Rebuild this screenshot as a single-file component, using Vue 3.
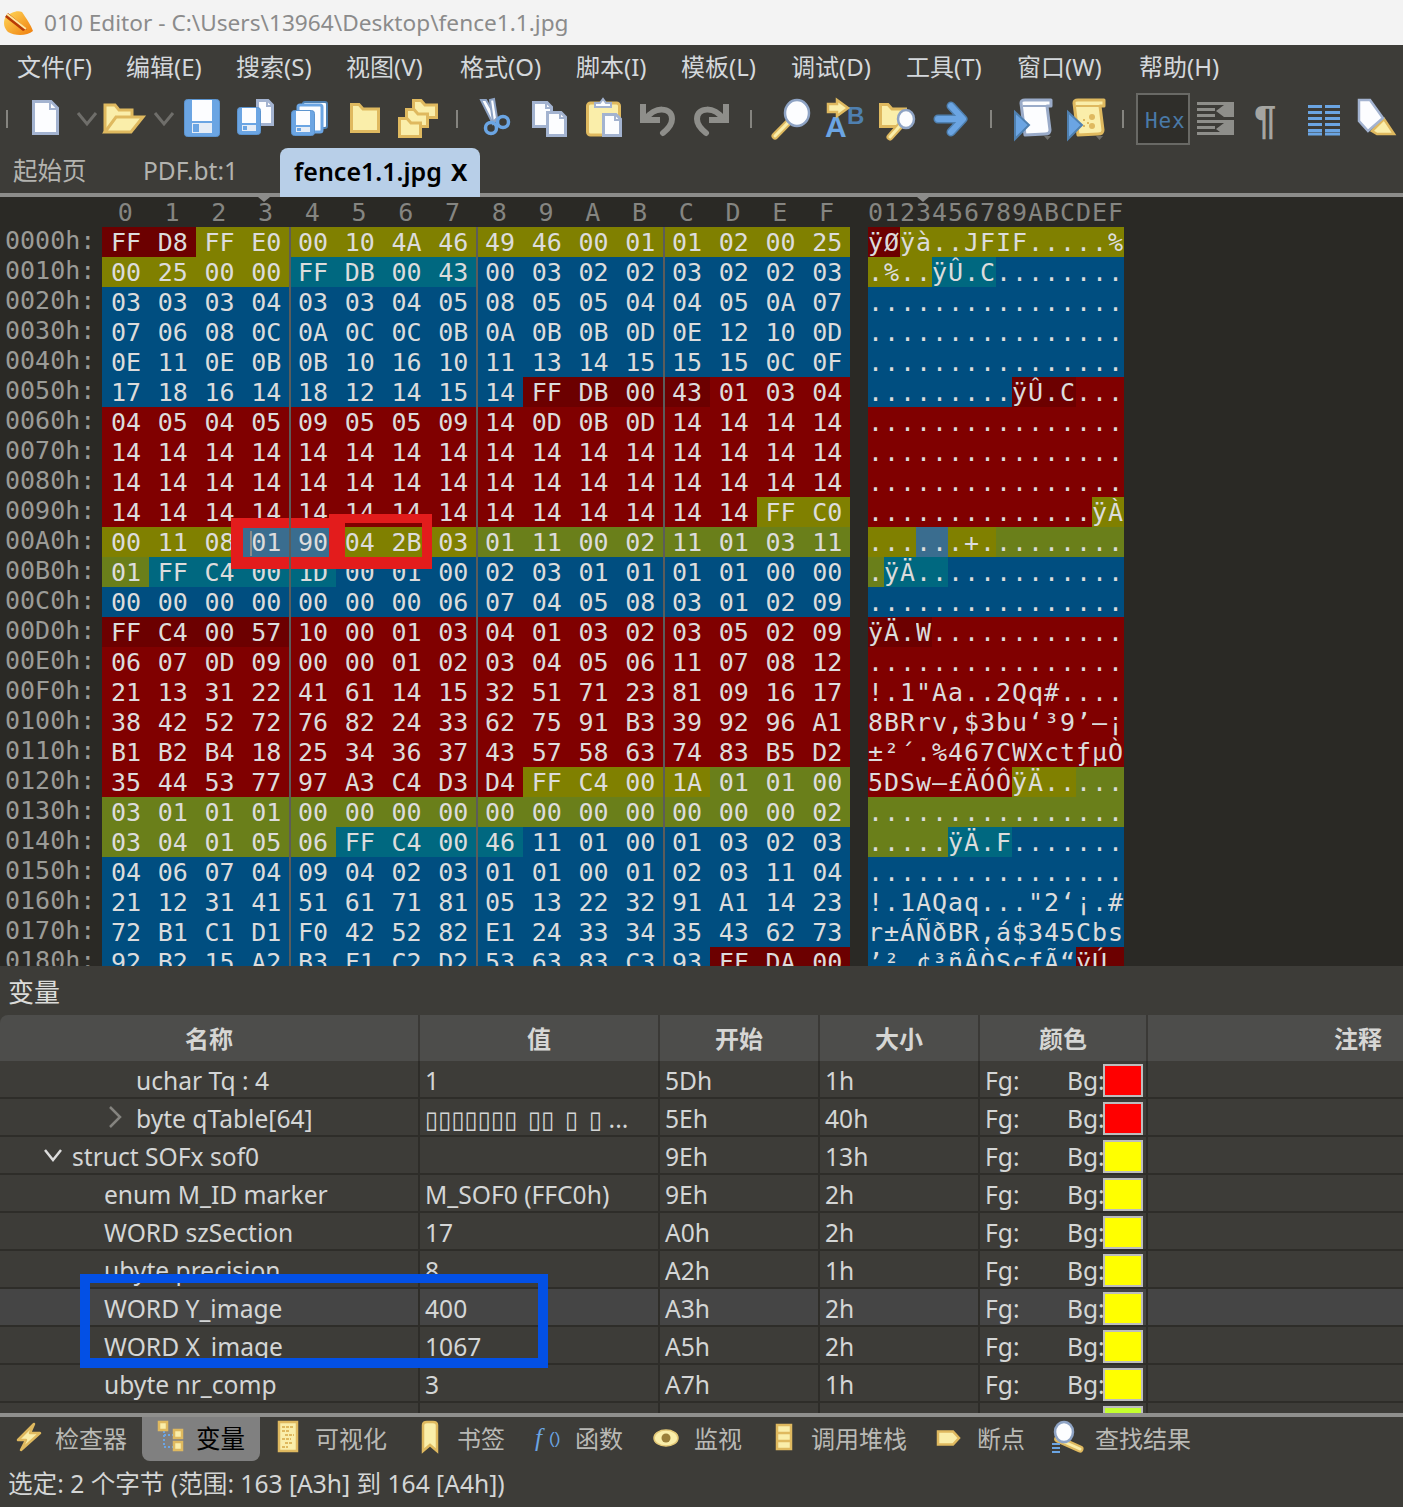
<script setup>
// hex dump, one string per 16 bytes
const dump = [
  'FF D8 FF E0 00 10 4A 46 49 46 00 01 01 02 00 25',
  '00 25 00 00 FF DB 00 43 00 03 02 02 03 02 02 03',
  '03 03 03 04 03 03 04 05 08 05 05 04 04 05 0A 07',
  '07 06 08 0C 0A 0C 0C 0B 0A 0B 0B 0D 0E 12 10 0D',
  '0E 11 0E 0B 0B 10 16 10 11 13 14 15 15 15 0C 0F',
  '17 18 16 14 18 12 14 15 14 FF DB 00 43 01 03 04',
  '04 05 04 05 09 05 05 09 14 0D 0B 0D 14 14 14 14',
  '14 14 14 14 14 14 14 14 14 14 14 14 14 14 14 14',
  '14 14 14 14 14 14 14 14 14 14 14 14 14 14 14 14',
  '14 14 14 14 14 14 14 14 14 14 14 14 14 14 FF C0',
  '00 11 08 01 90 04 2B 03 01 11 00 02 11 01 03 11',
  '01 FF C4 00 1D 00 01 00 02 03 01 01 01 01 00 00',
  '00 00 00 00 00 00 00 06 07 04 05 08 03 01 02 09',
  'FF C4 00 57 10 00 01 03 04 01 03 02 03 05 02 09',
  '06 07 0D 09 00 00 01 02 03 04 05 06 11 07 08 12',
  '21 13 31 22 41 61 14 15 32 51 71 23 81 09 16 17',
  '38 42 52 72 76 82 24 33 62 75 91 B3 39 92 96 A1',
  'B1 B2 B4 18 25 34 36 37 43 57 58 63 74 83 B5 D2',
  '35 44 53 77 97 A3 C4 D3 D4 FF C4 00 1A 01 01 00',
  '03 01 01 01 00 00 00 00 00 00 00 00 00 00 00 02',
  '03 04 01 05 06 FF C4 00 46 11 01 00 01 03 02 03',
  '04 06 07 04 09 04 02 03 01 01 00 01 02 03 11 04',
  '21 12 31 41 51 61 71 81 05 13 22 32 91 A1 14 23',
  '72 B1 C1 D1 F0 42 52 82 E1 24 33 34 35 43 62 73',
  '92 B2 15 A2 B3 F1 C2 D2 53 63 83 C3 93 FF DA 00'
]

// template colouring of the file, [first offset, last offset, class]
const ranges = [
  [0x00, 0x01, 'mk'], [0x02, 0x13, 'ol'], [0x14, 0x17, 'te'], [0x18, 0x58, 'bl'],
  [0x59, 0x5c, 'mk'], [0x5d, 0x9d, 're'], [0x9e, 0xa2, 'ol'], [0xa3, 0xa4, 'se'],
  [0xa5, 0xa7, 'ol'], [0xa8, 0xb0, 'gr'], [0xb1, 0xb4, 'te'], [0xb5, 0xcf, 'bl'],
  [0xd0, 0xd3, 'mk'], [0xd4, 0x128, 're'], [0x129, 0x12c, 'ol'], [0x12d, 0x144, 'gr'],
  [0x145, 0x148, 'te'], [0x149, 0x18c, 'bl'], [0x18d, 0x18f, 'mk']
]
const colourOf = (off) => ranges.find((r) => off >= r[0] && off <= r[1])[2]

const cp1252 = new TextDecoder('windows-1252')
const charOf = (b) => {
  if (b < 0x20 || b === 0x7f || b === 0x81 || b === 0x8d || b === 0x8f || b === 0x90 || b === 0x9d) return '.'
  return cp1252.decode(new Uint8Array([b]))
}

const rows = dump.map((line, i) => {
  const cells = line.split(' ').map((hex, j) => {
    const off = i * 16 + j
    return { hex, off, cls: colourOf(off), ch: charOf(parseInt(hex, 16)) }
  })
  return { label: (i * 16).toString(16).toUpperCase().padStart(4, '0') + 'h:', cells }
})

const headDigits = '0123456789ABCDEF'.split('')
const menus = [
  ['文件(F)', 109], ['编辑(E)', 110], ['搜索(S)', 110], ['视图(V)', 114], ['格式(O)', 116], ['脚本(I)', 105],
  ['模板(L)', 110], ['调试(D)', 115], ['工具(T)', 111], ['窗口(W)', 122], ['帮助(H)', 90]
]

const vars = [
  { name: 'uchar Tq : 4', indent: 136, value: '1', start: '5Dh', size: '1h', bg: '#ff0000' },
  { name: 'byte qTable[64]', indent: 136, arrow: 'right', tofu: '▯▯▯▯▯▯▯ ▯▯ ▯ ▯', value: ' ...', start: '5Eh', size: '40h', bg: '#ff0000' },
  { name: 'struct SOFx sof0', indent: 72, arrow: 'down', value: '', start: '9Eh', size: '13h', bg: '#ffff00' },
  { name: 'enum M_ID marker', indent: 104, value: 'M_SOF0 (FFC0h)', start: '9Eh', size: '2h', bg: '#ffff00' },
  { name: 'WORD szSection', indent: 104, value: '17', start: 'A0h', size: '2h', bg: '#ffff00' },
  { name: 'ubyte precision', indent: 104, value: '8', start: 'A2h', size: '1h', bg: '#ffff00' },
  { name: 'WORD Y_image', indent: 104, value: '400', start: 'A3h', size: '2h', bg: '#ffff00', active: true },
  { name: 'WORD X_image', indent: 104, value: '1067', start: 'A5h', size: '2h', bg: '#ffff00' },
  { name: 'ubyte nr_comp', indent: 104, value: '3', start: 'A7h', size: '1h', bg: '#ffff00' },
  { name: '', indent: 104, value: '', start: '', size: '', bg: '#c4ff2e', stub: true }
]

// icon colours
const Y = '#faeeaa', YS = '#dfb95f', B = '#6ba5e3', BD = '#4f80b0', W = '#fcfdff', WS = '#a3b3d0', G = '#8e8e8a'

const sep = (x) => `<rect x="${x}" y="110" width="2" height="18" fill="#85847f"/>`
const chev = (x) => `<path d="M${x} 113 L${x + 9} 124 L${x + 18} 113" fill="none" stroke="#6f6e6a" stroke-width="3"/>`
const doc = (x, y, w, h, f = 8) =>
  `<path d="M${x + 1.5} ${y + 1.5} H${x + w - f} L${x + w - 1.5} ${y + f} V${y + h - 1.5} H${x + 1.5} Z" fill="${W}" stroke="${WS}" stroke-width="3"/>` +
  `<path d="M${x + w - f - 1} ${y + 2} V${y + f + 1} H${x + w - 2}" fill="none" stroke="${WS}" stroke-width="2"/>`
const folder = (x, y, w, h) =>
  `<path d="M${x + 1.5} ${y + h - 1.5} V${y + 1.5} H${x + 9} L${x + 13} ${y + 6} H${x + w - 1.5} V${y + h - 1.5} Z" fill="${Y}" stroke="${YS}" stroke-width="3"/>`
const disk = (x, y, w, h) => {
  const lh = Math.round(h * 0.55), m = Math.round(w * 0.22)
  return `<rect x="${x + 0.5}" y="${y + 0.5}" width="${w - 1}" height="${h - 1}" rx="3" fill="${B}" stroke="#5c94cf"/>` +
    `<rect x="${x + m}" y="${y + 1}" width="${w - 2 * m}" height="${lh}" fill="${W}"/>` +
    `<rect x="${x + m}" y="${y + lh + 3}" width="${w - 2 * m}" height="${h - lh - 7}" fill="#e6edf6"/>` +
    `<rect x="${x + m + 1}" y="${y + lh + 4}" width="${Math.round(w * 0.17)}" height="${h - lh - 9}" fill="${B}"/>`
}
const lens = (cx, cy, rx, ry, x2, y2) =>
  `<path d="M${cx - rx * 0.7} ${cy + ry * 0.7} L${x2} ${y2}" stroke="${YS}" stroke-width="7" stroke-linecap="round"/>` +
  `<path d="M${cx - rx * 0.7} ${cy + ry * 0.7} L${x2} ${y2}" stroke="${Y}" stroke-width="3" stroke-linecap="round"/>` +
  `<ellipse cx="${cx}" cy="${cy}" rx="${rx}" ry="${ry}" fill="${W}" stroke="#8ea3c4" stroke-width="2.5"/>`
const scroll = (x, fill, stroke) =>
  `<path d="M${x + 6} 103 C${x + 6} 100 ${x + 8} 100 ${x + 10} 100 H${x + 36} V106 H${x + 32} L${x + 35} 130 C${x + 35} 133 ${x + 33} 134 ${x + 30} 134 L${x + 10} 135 Z" fill="${fill}" stroke="${stroke}" stroke-width="3" stroke-linejoin="round"/>` +
  `<path d="M${x + 8} 106 H${x + 32}" stroke="${stroke}" stroke-width="2"/>`
const play = (x) => `<path d="M${x} 112 L${x + 14} 125 L${x} 139 Z" fill="${B}" stroke="${BD}" stroke-width="2"/>`
const drop = (x) => `<path d="M${x} 136 H${x + 7} L${x + 3.5} 140 Z" fill="#6f6e6a"/>`
const undo = `<g fill="none" stroke="${G}" stroke-width="6"><path d="M643 104 V120 H660"/><path d="M646 119 C654 106 672 107 672 119 C672 125 668 129 663 133" stroke-linecap="round"/></g>`

const tools = [
  [0, 20, sep(6)],
  [20, 50, doc(32, 100, 27, 35)],
  [70, 30, chev(78)],
  [100, 50, `<path d="M105 132 V105 H115 L119 110 H132 V117" fill="${Y}" stroke="${YS}" stroke-width="3"/><path d="M105 132 L116 117 H143 L131 132 Z" fill="${Y}" stroke="${YS}" stroke-width="3"/>`],
  [150, 30, chev(155)],
  [180, 48, disk(184, 99, 36, 38)],
  [228, 54, doc(256, 99, 18, 27, 6) + disk(237, 107, 24, 28)],
  [282, 58, `<rect x="303" y="102" width="24" height="26" rx="2" fill="${W}" stroke="${BD}" stroke-width="2"/><rect x="298" y="105" width="24" height="27" rx="2" fill="${W}" stroke="${B}" stroke-width="3"/>` + disk(291, 110, 24, 26)],
  [340, 50, folder(350, 103, 30, 30)],
  [390, 55, folder(412, 99, 26, 20) + folder(405, 108, 24, 20) + folder(398, 117, 24, 21)],
  [445, 25, sep(456)],
  [470, 50, `<path d="M481 100 L486 100 L497 119 L493 124 Z" fill="${W}" stroke="#8ea3c4" stroke-width="2"/><path d="M490 100 L494 99 L497 118 L493 122 Z" fill="${W}" stroke="#8ea3c4" stroke-width="2"/><circle cx="491" cy="128" r="5.5" fill="none" stroke="${B}" stroke-width="3.5"/><circle cx="503" cy="122" r="5.5" fill="none" stroke="${B}" stroke-width="3.5"/>`],
  [520, 55, doc(532, 101, 21, 27, 6) + doc(546, 111, 21, 26, 6)],
  [575, 55, `<rect x="587.5" y="103" width="32" height="32" rx="3" fill="${Y}" stroke="${YS}" stroke-width="3"/><path d="M595 107 V103 H600 L603 99 L606 103 H611 V107 Z" fill="${W}" stroke="${WS}" stroke-width="2"/>` + doc(602, 113, 20, 24, 6)],
  [630, 55, undo],
  [685, 55, `<g transform="translate(1369 0) scale(-1 1)">${undo}</g>`],
  [740, 22, sep(750)],
  [762, 53, lens(797, 113, 12, 13, 775, 136)],
  [815, 55, `<text x="847" y="124" font-family="Liberation Sans" font-size="24" font-weight="700" fill="${BD}">B</text><text x="825" y="137" font-family="Liberation Sans" font-size="30" font-weight="700" fill="${B}">A</text><path d="M828 104 H837 V100 L848 108 L837 116 V112 H828 Z" fill="${Y}" stroke="${YS}" stroke-width="2.5"/>`],
  [870, 55, folder(879, 103, 28, 25) + lens(906, 119, 8, 9, 890, 137)],
  [925, 50, `<path d="M938 119 H962 M951 106 L963 119 L951 132" fill="none" stroke="${BD}" stroke-width="9" stroke-linecap="round" stroke-linejoin="round"/><path d="M938 119 H962 M951 106 L963 119 L951 132" fill="none" stroke="${B}" stroke-width="6" stroke-linecap="round" stroke-linejoin="round"/>`],
  [975, 30, sep(990)],
  [1005, 53, scroll(1015, W, '#9aabc9') + play(1015) + drop(1044)],
  [1058, 52, scroll(1068, Y, YS) + `<g fill="${YS}"><circle cx="1092" cy="117" r="3"/><circle cx="1092" cy="126" r="3"/><rect x="1083" y="119" width="2" height="2"/><rect x="1083" y="125" width="2" height="2"/><rect x="1087" y="122" width="2" height="2"/></g>` + play(1068) + drop(1096)],
  [1110, 20, sep(1122)],
  [1130, 62, `<rect x="1137" y="94" width="52" height="50" fill="#2f2e2a" stroke="#696965" stroke-width="2"/><text x="1145" y="128" font-family="DejaVu Sans Mono" font-size="21" letter-spacing="0.8" fill="#4a7aa8">Hex</text>`],
  [1192, 48, `<g fill="${G}"><rect x="1197" y="102" width="37" height="3"/><rect x="1197" y="108" width="18" height="3"/><rect x="1197" y="114" width="18" height="3"/><rect x="1197" y="120" width="37" height="3"/><rect x="1197" y="126" width="18" height="3"/><rect x="1197" y="132" width="37" height="3"/><rect x="1224" y="102" width="10" height="15"/><rect x="1224" y="120" width="10" height="15"/><path d="M1224 105 V117 L1216 111 Z M1224 123 V135 L1216 129 Z"/></g>`],
  [1240, 50, `<text x="1254" y="134" font-family="Liberation Sans" font-size="40" font-weight="700" fill="#a5a5a1">¶</text>`],
  [1290, 60, `<path d="M1308 106.5 H1322 M1325 106.5 H1340 M1308 112.5 H1322 M1325 112.5 H1340 M1308 118.5 H1322 M1325 118.5 H1340 M1308 124.5 H1322 M1325 124.5 H1340 M1308 130.5 H1322 M1325 130.5 H1340 M1308 134 H1322 M1325 134 H1340" stroke="${B}" stroke-width="3"/>`],
  [1350, 53, `<path d="M1372 131 L1384 119 L1394 134 H1377 Z" fill="${Y}" stroke="${YS}" stroke-width="2.5"/><path d="M1359 100 H1370 L1383 118 L1368 131 L1359 121 Z" fill="${W}" stroke="${WS}" stroke-width="2.5"/>`]
]

const dockTabs = [
  { text: '检查器', x: 0, w: 142, iconW: 55, svg: `<path d="M34 1424 L18 1440 H26 L21 1450 L40 1433 H30 Z" fill="${Y}" stroke="${YS}" stroke-width="2.5" stroke-linejoin="round"/>` },
  { text: '变量', x: 142, w: 118, iconW: 54, active: true, svg: `<path d="M164 1431 V1447 M164 1435 H173 M164 1447 H173" stroke="${B}" stroke-width="2" stroke-dasharray="2 2" fill="none"/><g fill="${Y}" stroke="${YS}" stroke-width="2.5"><rect x="159" y="1422" width="8" height="8"/><rect x="174" y="1430" width="8" height="8"/><rect x="174" y="1442" width="8" height="8"/></g>` },
  { text: '可视化', x: 260, w: 144, iconW: 55, svg: `<rect x="279" y="1422" width="18" height="29" fill="${Y}" stroke="${YS}" stroke-width="2.5"/><path d="M282 1427 H294 M282 1431 H290 M285 1435 H294 M282 1439 H291 M285 1443 H292 M282 1447 H288" stroke="${YS}" stroke-width="1.8" stroke-dasharray="3 1"/>` },
  { text: '书签', x: 404, w: 112, iconW: 53, svg: `<path d="M423 1425 C423 1423 425 1422 427 1422 H433 C435 1422 437 1423 437 1425 V1451 L430 1445 L423 1451 Z" fill="${Y}" stroke="${YS}" stroke-width="2.5"/>` },
  { text: '函数', x: 516, w: 120, iconW: 59, svg: `<text x="535" y="1446" font-family="Liberation Serif" font-style="italic" font-size="25" fill="${B}">f</text><text x="549" y="1444" font-family="Liberation Sans" font-size="17" fill="${B}">()</text>` },
  { text: '监视', x: 636, w: 122, iconW: 58, svg: `<ellipse cx="666" cy="1438" rx="12" ry="8" fill="${Y}" stroke="#e3c877" stroke-width="1.5"/><circle cx="666" cy="1438" r="4.5" fill="#9a7f3a"/>` },
  { text: '调用堆栈', x: 758, w: 162, iconW: 53, svg: `<rect x="777" y="1425" width="14" height="24" fill="${Y}" stroke="${YS}" stroke-width="2.5"/><path d="M777 1433 H791 M777 1441 H791" stroke="${YS}" stroke-width="2.5"/>` },
  { text: '断点', x: 920, w: 115, iconW: 57, svg: `<path d="M938 1431.5 H953 L959 1438 L953 1444.5 H938 Z" fill="${Y}" stroke="${YS}" stroke-width="2.5"/>` },
  { text: '查找结果', x: 1035, w: 168, iconW: 60, svg: lens(1064, 1432, 9, 10, 1080, 1449) + `<path d="M1052 1444 H1060 M1052 1448 H1060 M1052 1452 H1060" stroke="${B}" stroke-width="2.2"/>` }
]
</script>

<template>
  <div class="app">
    <div class="titlebar">
      <svg class="logo" width="32" height="28" viewBox="0 0 32 28">
        <defs>
          <linearGradient id="logoFill" x1="0" y1="0" x2="1" y2="1">
            <stop offset="0" stop-color="#ffd95a" />
            <stop offset="1" stop-color="#ef7d0c" />
          </linearGradient>
        </defs>
        <path d="M3 9 C8 3 16 1 20 3 C24 9 29 16 31 22 C25 27 13 27 6 23 C2 19 1 14 3 9 Z" fill="url(#logoFill)" />
        <path d="M6 4 L25 20 L21 22 L3 8 Z" fill="#b83a05" />
        <path d="M5 5 L24 20" stroke="#ffe9a0" stroke-width="2" />
      </svg>
      <span class="title-text">010 Editor - C:\Users\13964\Desktop\fence1.1.jpg</span>
    </div>

    <div class="menubar">
      <span v-for="m in menus" :key="m[0]" class="menu-item" :style="{ width: m[1] + 'px' }">{{ m[0] }}</span>
    </div>

    <div class="toolbar">
      <svg
        v-for="t in tools"
        :key="t[0]"
        :width="t[1]"
        height="58"
        :viewBox="`${t[0]} 90 ${t[1]} 58`"
        v-html="t[2]"
      ></svg>
    </div>

    <div class="filetabs">
      <span class="filetab tab-start">起始页</span>
      <span class="filetab tab-pdf">PDF.bt:1</span>
      <span class="filetab active">fence1.1.jpg<b class="close">x</b></span>
    </div>
    <div class="tabline"><i class="tabline-active"></i></div>

    <div class="hexview">
      <i class="marker marker-hex"></i>
      <i class="marker marker-ascii"></i>
      <div class="hexrow head">
        <span class="label"></span>
        <span v-for="d in headDigits" :key="d" class="byte">{{ d }}</span>
        <span class="ascii-head">0123456789ABCDEF</span>
      </div>
      <div v-for="r in rows" :key="r.label" class="hexrow">
        <span class="label">{{ r.label }}</span>
        <span
          v-for="c in r.cells"
          :key="c.off"
          class="byte"
          :class="[c.cls, { caret: c.off === 0xa3 }]"
        >{{ c.hex }}</span>
        <span class="ascii">
          <span v-for="c in r.cells" :key="c.off" class="ch" :class="c.cls">{{ c.ch }}</span>
        </span>
      </div>
    </div>

    <div class="panel-title">变量</div>
    <div class="vartable">
      <div class="varhead">
        <span class="hcell">名称</span>
        <span class="hcell">值</span>
        <span class="hcell">开始</span>
        <span class="hcell">大小</span>
        <span class="hcell">颜色</span>
        <span class="hcell last">注释</span>
      </div>
      <div class="varbody">
        <div v-for="(v, i) in vars" :key="i" class="varrow" :class="{ active: v.active }">
          <span class="cell name" :style="{ paddingLeft: v.indent + 'px' }">
            <svg v-if="v.arrow === 'right'" class="arrow arrow-right" width="16" height="24" viewBox="0 0 16 24">
              <path d="M3 2 L13 12 L3 22" fill="none" stroke="#85847f" stroke-width="2.5" />
            </svg>
            <svg v-if="v.arrow === 'down'" class="arrow arrow-down" width="20" height="16" viewBox="0 0 20 16">
              <path d="M2 2 L10 12 L18 2" fill="none" stroke="#dcdcdc" stroke-width="2.5" />
            </svg>
            {{ v.name }}
          </span>
          <span class="cell value"><span v-if="v.tofu" class="tofu">{{ v.tofu }}</span>{{ v.value }}</span>
          <span class="cell start">{{ v.start }}</span>
          <span class="cell size">{{ v.size }}</span>
          <span class="cell colour">
            <span class="fg">{{ v.stub ? '' : 'Fg:' }}</span>
            <span class="bg">{{ v.stub ? '' : 'Bg:' }}</span>
            <i class="swatch" :style="{ background: v.bg }"></i>
          </span>
          <span class="cell last"></span>
        </div>
      </div>
    </div>

    <div class="dockline"></div>
    <div class="docktabs">
      <div v-for="t in dockTabs" :key="t.text" class="docktab" :class="{ active: t.active }" :style="{ width: t.w + 'px' }">
        <svg :width="t.iconW" height="44" :viewBox="`${t.x} 1417 ${t.iconW} 44`" v-html="t.svg"></svg>
        <span>{{ t.text }}</span>
      </div>
    </div>
    <div class="statusbar">选定: 2 个字节 (范围: 163 [A3h] 到 164 [A4h])</div>

    <!-- annotations drawn on top of the screenshot -->
    <i class="mark red-a"></i>
    <i class="mark red-b"></i>
    <i class="mark blue-box"></i>
  </div>
</template>

<style scoped>
.app {
  position: relative;
  width: 1403px;
  height: 1507px;
  overflow: hidden;
  background: #3d3c38;
  font-family: "Noto Sans", "Noto Sans CJK SC", sans-serif;
  color: #d8d8d6;
}

.titlebar {
  height: 45px;
  background: #f3f3f3;
  display: flex;
  align-items: center;
}
.logo {
  margin-left: 2px;
  margin-right: 10px;
}
.title-text {
  color: #8b8b8b;
  font-size: 22.65px;
  line-height: 47px;
  white-space: nowrap;
}

.menubar {
  height: 45px;
  box-sizing: border-box;
  display: flex;
  align-items: center;
  padding: 0 0 2px 17px;
}
.menu-item {
  flex: none;
  font-size: 24px;
  line-height: 43px;
  white-space: nowrap;
  color: #d4d8dc;
}

.toolbar {
  height: 58px;
  display: flex;
}
.toolbar svg {
  flex: none;
}

.filetabs {
  height: 45px;
  display: flex;
  align-items: flex-end;
  position: relative;
}
.filetab {
  height: 45px;
  line-height: 46px;
  font-size: 24.5px;
  color: #b3b3af;
  white-space: nowrap;
}
.tab-start {
  width: 130px;
  padding-left: 13px;
  box-sizing: border-box;
}
.tab-pdf {
  width: 150px;
  padding-left: 13px;
  box-sizing: border-box;
}
.filetab.active {
  width: 200px;
  box-sizing: border-box;
  padding-left: 14px;
  background: #b8cfe8;
  border-radius: 8px 8px 0 0;
  color: #000;
  font-size: 25px;
  font-weight: 600;
}
.close {
  font-weight: 600;
  font-size: 30px;
  line-height: 40px;
  margin-left: 9px;
}
.tabline {
  height: 4px;
  background: #8c8c8a;
  position: relative;
}
.tabline-active {
  display: block;
  margin-left: 280px;
  width: 200px;
  height: 4px;
  background: #b8cfe8;
}

.hexview {
  position: relative;
  height: 769px;
  overflow: hidden;
  background: #2a2925;
  font-family: "DejaVu Sans Mono", monospace;
  font-size: 25px;
}
.marker {
  position: absolute;
  top: 0;
  width: 0;
  height: 0;
  border-left: 6px solid transparent;
  border-right: 6px solid transparent;
  border-top: 5px solid #8c8c8a;
}
.marker-hex {
  left: 258px;
}
.marker-ascii {
  left: 917px;
}
.hexrow {
  display: flex;
  height: 30px;
  line-height: 31px;
  white-space: nowrap;
}
.label {
  flex: none;
  width: 102px;
  box-sizing: border-box;
  padding-left: 5px;
  line-height: 28px;
  color: #9b9b97;
}
.byte {
  flex: none;
  width: 46.75px;
  box-sizing: border-box;
  padding-left: 9px;
  color: #dcdcdc;
  position: relative;
}
.head .byte {
  text-align: center;
  padding-left: 0;
  color: #858581;
}
/* group separator after every 4th byte, label is child 1 */
.byte:nth-child(4n + 1):not(:nth-child(17))::after {
  content: "";
  position: absolute;
  z-index: 1;
  top: 0;
  right: -2px;
  width: 2px;
  height: 100%;
  background: #5c5c5a;
}
.head .byte::after {
  display: none;
}
.caret::before {
  content: "";
  position: absolute;
  left: 8px;
  top: 4px;
  width: 2px;
  height: 25px;
  background: #8c8c8a;
}
.ascii,
.ascii-head {
  margin-left: 18px;
  display: flex;
  color: #dcdcdc;
  letter-spacing: 0.95px;
}
.ascii-head {
  color: #858581;
}
.ch {
  flex: none;
  width: 16px;
  overflow: hidden;
}
.mk { background: #6c0000; }
.re { background: #800000; }
.ol { background: #808000; }
.gr { background: #6a7f1a; }
.te { background: #006880; }
.bl { background: #004e80; }
.se { background: #3a6d8f; }

.panel-title {
  height: 49px;
  line-height: 52px;
  padding-left: 8px;
  font-size: 26px;
  color: #dcdcda;
}

.vartable {
  height: 398px;
}
.varhead,
.varrow {
  display: grid;
  grid-template-columns: 420px 240px 160px 160px 168px 255px;
}
.varhead {
  height: 46px;
  background: #4d4d4b;
  border-radius: 8px 0 0 0;
}
.hcell {
  line-height: 48px;
  text-align: center;
  font-size: 24px;
  font-weight: 700;
  color: #d6d6d4;
  border-right: 2px solid #3a3936;
}
.hcell.last {
  text-align: right;
  padding-right: 21px;
  border-right: 0;
}
.varbody {
  height: 352px;
  overflow: hidden;
}
.varrow {
  height: 38px;
  box-sizing: border-box;
}
.varrow.active {
  background: #454545;
}
.cell {
  box-sizing: border-box;
  height: 38px;
  line-height: 39px;
  padding-left: 5px;
  font-size: 24.6px;
  white-space: nowrap;
  color: #d4d6d6;
  border-right: 2px solid #2e2d29;
  border-bottom: 2px solid #2e2d29;
  position: relative;
}
.cell.last {
  border-right: 0;
}
.tofu {
  font-family: "DejaVu Sans", sans-serif;
  font-size: 24px;
  word-spacing: 3px;
}
.arrow {
  position: absolute;
}
.arrow-right {
  left: 107px;
  top: 6px;
}
.arrow-down {
  left: 43px;
  top: 11px;
}
.colour {
  display: block;
}
.fg {
  position: absolute;
  left: 5px;
}
.bg {
  position: absolute;
  left: 87px;
}
.swatch {
  position: absolute;
  left: 123px;
  top: 3px;
  width: 40px;
  height: 33px;
  box-sizing: border-box;
  border: 2px solid #bdbdbd;
}

.dockline {
  height: 4px;
  background: #8f8f8d;
}
.docktabs {
  height: 44px;
  display: flex;
}
.docktab {
  flex: none;
  display: flex;
  align-items: center;
  box-sizing: border-box;
  font-size: 24px;
  line-height: 42px;
  color: #b9b9b5;
  white-space: nowrap;
}
.docktab svg {
  flex: none;
}
.docktab.active {
  background: #808080;
  border-radius: 0 0 8px 8px;
  font-size: 24.5px;
  color: #000;
}
.statusbar {
  height: 46px;
  line-height: 46px;
  padding-left: 8px;
  font-size: 24.6px;
  color: #d4d6d6;
  white-space: nowrap;
}

.mark {
  position: absolute;
  box-sizing: border-box;
}
.red-a {
  left: 231px;
  top: 518px;
  width: 114px;
  height: 51px;
  border: solid #e31c1c;
  border-width: 10px 12px 12px 12px;
}
.red-b {
  left: 329px;
  top: 514px;
  width: 103px;
  height: 55px;
  border: solid #e31c1c;
  border-width: 9px 10px 12px 16px;
}
.blue-box {
  left: 80px;
  top: 1274px;
  width: 468px;
  height: 94px;
  border: solid #0350e5;
  border-width: 9px 10px 10px 10px;
}
</style>

<style>
html,
body {
  margin: 0;
  background: #3d3c38;
  overflow: hidden;
}
</style>
